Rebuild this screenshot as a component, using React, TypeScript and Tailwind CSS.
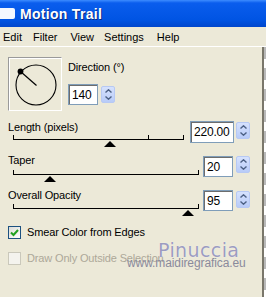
import React from 'react';

const ui = "font-['Liberation_Sans',Arial,sans-serif]";

const Spin: React.FC<{ className?: string }> = ({ className = '' }) => (
  <div
    className={`flex flex-col w-[14px] h-[17px] rounded-[2px] border border-[#b7c9f4] bg-[linear-gradient(180deg,#d6e2fd,#b8cbf8)] ${className}`}
  >
    <div className="flex-1 flex items-center justify-center">
      <svg width="7" height="4" viewBox="0 0 7 4">
        <path d="M0.5 3.5 L3.5 0.8 L6.5 3.5" stroke="#4d6185" strokeWidth="1.4" fill="none" />
      </svg>
    </div>
    <div className="flex-1 flex items-center justify-center">
      <svg width="7" height="4" viewBox="0 0 7 4">
        <path d="M0.5 0.5 L3.5 3.2 L6.5 0.5" stroke="#4d6185" strokeWidth="1.4" fill="none" />
      </svg>
    </div>
  </div>
);

const NumBox: React.FC<{ value: string; className: string }> = ({ value, className }) => (
  <div
    className={`border border-[#7f9db9] bg-white shadow-[inset_1px_1px_0_#6d6d6d] flex items-center pl-[3px] text-[12px] text-black tracking-[-0.2px] ${className}`}
  >
    {value}
  </div>
);

const Slider: React.FC<{ className: string; pos: number; ticks: number[] }> = ({ className, pos, ticks }) => (
  <div className={`relative h-[9px] ml-[5px] ${className}`}>
    <div className="absolute top-0 left-0 right-0 h-px bg-black" />
    {ticks.map((t) => (
      <div key={t} className="absolute top-[-4px] w-px h-[5px] bg-black" style={{ left: t }} />
    ))}
    <svg className="absolute top-[2px]" style={{ left: pos - 6 }} width="12" height="6" viewBox="0 0 12 6">
      <path d="M6 0 L12 6 L0 6 Z" fill="#000" />
    </svg>
  </div>
);

export default function App() {
  return (
    <div className={`w-[266px] h-[297px] flex flex-col bg-[#ece9d8] overflow-hidden text-[11px] text-black ${ui}`}>
      {/* title bar */}
      <div className="h-[27px] flex items-center bg-[linear-gradient(180deg,#3d8cff_0px,#0a5ded_3px,#0054e3_20px,#0046cc_27px)]">
        <div className="w-[15px] h-[11px] bg-[#f4f8ff] rounded-r-[2px]" />
        <span className="ml-[5px] mt-[2px] text-[14px] font-bold text-white tracking-[0.3px] [text-shadow:1px_1px_0_#0a2a80]">
          Motion Trail
        </span>
      </div>

      {/* menu */}
      <div className="h-[20px] flex items-center pl-[3px] pt-[2px] border-b border-white">
        <span>Edit</span>
        <span className="ml-[11px]">Filter</span>
        <span className="ml-[13px]">View</span>
        <span className="ml-[10px]">Settings</span>
        <span className="ml-[13px]">Help</span>
      </div>

      <div className="flex flex-1">
        <div className="relative flex-1 flex flex-col pl-[8px] tracking-[-0.15px]">
          {/* direction */}
          <div className="flex mt-[10px]">
            <div className="w-[54px] h-[54px] border border-t-[#9a9a9a] border-l-[#9a9a9a] border-r-white border-b-white shadow-[inset_1px_1px_0_#ffffff]">
              <svg width="52" height="52" viewBox="0 0 52 52">
                <circle cx="27" cy="27" r="20" stroke="#000" strokeWidth="1.1" fill="none" />
                <line x1="11.5" y1="13.5" x2="27.5" y2="27.5" stroke="#000" strokeWidth="1.2" />
                <circle cx="11.5" cy="13.5" r="2.9" fill="#000" />
              </svg>
            </div>
            <div className="ml-[6px] flex flex-col">
              <span className="mt-[4px] leading-[13px]">Direction (°)</span>
              <div className="mt-[10px] flex items-center">
                <NumBox value="140" className="w-[30px] h-[21px]" />
                <Spin className="ml-[3px]" />
              </div>
            </div>
          </div>

          {/* length */}
          <div className="flex h-[33px] mt-[10px]">
            <div className="w-[182px] flex flex-col">
              <span className="leading-[13px]">Length (pixels)</span>
              <Slider className="w-[171px] mt-[5px]" pos={97} ticks={[0, 135, 170]} />
            </div>
            <NumBox value="220.00" className="w-[44px] h-[22px]" />
            <Spin className="ml-[2px] mt-[1px]" />
          </div>

          {/* taper */}
          <div className="flex h-[35px]">
            <div className="w-[195px] flex flex-col">
              <span className="leading-[13px]">Taper</span>
              <Slider className="w-[186px] mt-[7px]" pos={37} ticks={[0, 185]} />
            </div>
            <NumBox value="20" className="w-[30px] h-[21px] mt-[2px]" />
            <Spin className="ml-[3px] mt-[2px]" />
          </div>

          {/* opacity */}
          <div className="flex h-[37px]">
            <div className="w-[195px] flex flex-col">
              <span className="leading-[13px]">Overall Opacity</span>
              <Slider className="w-[186px] mt-[6px]" pos={175} ticks={[0, 185]} />
            </div>
            <NumBox value="95" className="w-[30px] h-[21px] mt-[1px]" />
            <Spin className="ml-[3px] mt-[2px]" />
          </div>

          {/* checkboxes */}
          <div className="flex items-center h-[13px]">
            <div className="w-[13px] h-[13px] border border-[#1c5180] bg-[linear-gradient(135deg,#dcdcd7,#ffffff)] flex items-center justify-center">
              <svg width="9" height="9" viewBox="0 0 9 9">
                <path d="M1 4.5 L3.5 7 L8 2" stroke="#21a121" strokeWidth="2" fill="none" />
              </svg>
            </div>
            <span className="ml-[6px]">Smear Color from Edges</span>
          </div>
          <div className="flex items-center h-[13px] mt-[13px]">
            <div className="w-[13px] h-[13px] border border-[#cac8bb] bg-[#f4f3ee]" />
            <span className="ml-[6px] text-[#aca899]">Draw Only Outside Selection</span>
          </div>

          {/* watermark */}
          <span className="absolute left-[158px] top-[196px] text-[19px] leading-[15px] tracking-[0.4px] font-['DejaVu_Sans',sans-serif] text-[#9c9cc0] [text-shadow:0_0_1px_#ffffff]">
            Pinuccia
          </span>
          <span className="absolute left-[127px] top-[211px] text-[12px] leading-[10px] text-[#8a8a9c] tracking-[-0.1px]">
            www.maidiregrafica.eu
          </span>
        </div>
        <div className="w-[2px] bg-[#7a776b]" />
        <div className="w-[2px] bg-[repeating-linear-gradient(180deg,#b9b9b9_0px,#b9b9b9_12px,#ffffff_12px,#ffffff_21px)]" />
      </div>
    </div>
  );
}
